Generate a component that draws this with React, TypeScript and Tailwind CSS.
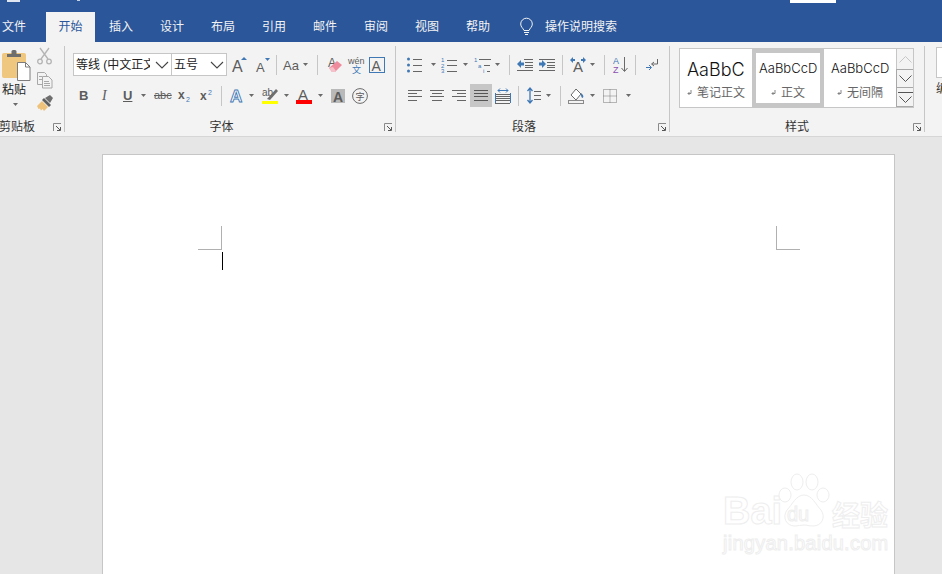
import type { ReactNode } from "react"

const GRAY = "#666666"
const BLUE = "#3f78b5"

function Ic({ w, h, className, children }: { w: number; h: number; className?: string; children: ReactNode }) {
  return (
    <svg width={w} height={h} viewBox={`0 0 ${w} ${h}`} className={`shrink-0 overflow-visible ${className ?? ""}`}>
      {children}
    </svg>
  )
}

function Caret({ className }: { className?: string }) {
  return (
    <Ic w={5} h={3} className={className}>
      <path d="M0 0h5L2.500 3z" fill="#6a6a6a" />
    </Ic>
  )
}

function Sep({ className }: { className?: string }) {
  return <div className={`h-[20px] w-px shrink-0 bg-[#c6c6c6] ${className ?? ""}`} />
}

// horizontal text lines used by the list and alignment icons
function Bars({ rows, fill = GRAY }: { rows: [number, number, number][]; fill?: string }) {
  return (
    <g fill={fill} shapeRendering="crispEdges">
      {rows.map(([x, y, w], i) => (
        <rect key={i} x={x} y={y} width={w} height={1} />
      ))}
    </g>
  )
}

function Chevron({ stroke = "#555555", className }: { stroke?: string; className?: string }) {
  return (
    <Ic w={14} h={8} className={className}>
      <path d="M1 1l6 6 6-6" fill="none" stroke={stroke} strokeWidth="1.100" />
    </Ic>
  )
}

function Launcher() {
  return (
    <Ic w={9} h={9} className="absolute bottom-[0px] right-[2px]">
      <path d="M.5 8V.5H8" fill="none" stroke="#8a8a8a" />
      <path d="M3 3l4 4M7.500 4v3.500H4" fill="none" stroke="#555555" />
    </Ic>
  )
}

function Group({ label, width, children, labelClass }: { label: string; width: string; children: ReactNode; labelClass?: string }) {
  return (
    <div className={`relative my-[4px] flex shrink-0 flex-col border-r border-[#c6c6c6] pt-[7px] ${width}`}>
      <div className="flex-1">{children}</div>
      <div className={`-mb-[3px] h-[16px] text-center text-[12px] leading-[16px] text-[#333333] ${labelClass ?? ""}`}>{label}</div>
      <Launcher />
    </div>
  )
}

function Row({ children, className }: { children: ReactNode; className?: string }) {
  return <div className={`flex h-[23px] items-center ${className ?? ""}`}>{children}</div>
}

function Combo({ text, className, textWidth }: { text: string; className: string; textWidth: string }) {
  return (
    <div className={`flex h-[23px] items-center justify-between border border-[#c6c6c6] bg-white pr-[2px] ${className}`}>
      <span className={`overflow-hidden whitespace-nowrap pl-[2px] pt-[1px] text-[12px] text-[#222222] ${textWidth}`}>{text}</span>
      <Chevron stroke="#444444" />
    </div>
  )
}

function Clipboard() {
  return (
    <div className="-mt-[5px] flex h-[65px]">
      <div className="flex w-[36px] flex-col pl-[2px] pt-[2px]">
        <Ic w={29} h={32}>
          <rect x="0" y="3" width="24" height="25" rx="2" fill="#f0c77e" />
          <path d="M5 4h14v3H5z" fill="#6e6e6e" />
          <rect x="9.500" y="0" width="5" height="5" rx="1.500" fill="#6e6e6e" />
          <path d="M15.500 12.500h8l4.500 4.500v13.500h-12.500z" fill="#ffffff" stroke="#7c7c7c" />
          <path d="M23.500 12.500v4.500h4.500" fill="none" stroke="#7c7c7c" />
        </Ic>
        <span className="w-[26px] text-[12px] leading-[17px] text-[#222222]">粘贴</span>
        <Caret className="ml-[11px] mt-[4px]" />
      </div>
      <div className="flex flex-col pl-[1px]">
        <Ic w={15} h={17}>
          <g fill="none" stroke="#b4b4b4" strokeWidth="1.300">
            <path d="M3 0l8 11M12 0L4 11" />
            <circle cx="3" cy="13.500" r="2.300" />
            <circle cx="12" cy="13.500" r="2.300" />
          </g>
        </Ic>
        <Ic w={16} h={17} className="mt-[7px]">
          <g fill="#f3f3f3" stroke="#a8a8a8">
            <path d="M.5.500h7l2 2v10h-9z" />
            <path d="M5.500 4.500h6l3.500 3.500v8h-9.500z" />
          </g>
          <Bars fill="#a8a8a8" rows={[[2, 4, 3], [2, 7, 3], [7, 9, 5], [7, 11, 6], [7, 13, 6]]} />
        </Ic>
        <Ic w={17} h={17} className="mt-[6px]">
          <path d="M0 11l5-5 6 6-4 4-1.500-2-1.500 1.500-1-2-1.500.5z" fill="#eec27a" />
          <path d="M5 5l2-2 7 7-2 2z" fill="#5f5f5f" />
          <path d="M8 3l5-3 3 3-3 5z" fill="#6e6e6e" />
        </Ic>
      </div>
    </div>
  )
}

function FontRowOne() {
  const t = { fontFamily: "Liberation Sans", fill: "#5c5c5c" }
  return (
    <Row className="pl-[8px]">
      <Combo text="等线 (中文正文)" textWidth="w-[76px]" className="w-[99px]" />
      <Combo text="五号" textWidth="w-[30px]" className="-ml-px w-[56px]" />
      <Ic w={15} h={15} className="ml-[5px]">
        <text x="0" y="15" fontSize="16" {...t}>A</text>
        <path d="M9 3l3-3 3 3z" fill={BLUE} />
      </Ic>
      <Ic w={14} h={15} className="ml-[9px]">
        <text x="0" y="15" fontSize="13" {...t}>A</text>
        <path d="M9 1h5l-2.500 3z" fill={BLUE} />
      </Ic>
      <Sep className="ml-[6px]" />
      <Ic w={15} h={14} className="ml-[6px]">
        <text x="0" y="12" fontSize="13" {...t}>Aa</text>
      </Ic>
      <Caret className="ml-[5px]" />
      <Sep className="ml-[9px]" />
      <Ic w={15} h={17} className="ml-[9px]">
        <text x="1" y="11" fontSize="12" {...t}>A</text>
        <path d="M2 12l8-7 5 4-7 7H5z" fill="#ee8b9c" />
        <path d="M2 12l3 4h3l1-1-3-4z" fill="#f4c0c9" />
      </Ic>
      <Ic w={16} h={17} className="ml-[6px]">
        <text x="0" y="8" fontSize="9" {...t}>wén</text>
        <text x="4" y="17" fontSize="9" fill={BLUE} fontFamily="Noto Sans CJK SC">文</text>
      </Ic>
      <Ic w={16} h={16} className="ml-[5px]">
        <rect x=".5" y=".5" width="15" height="15" fill="none" stroke={BLUE} />
        <text x="2.500" y="13.500" fontSize="14" {...t}>A</text>
      </Ic>
    </Row>
  )
}

function FontRowTwo() {
  const t = { fontFamily: "Liberation Sans", fill: "#5c5c5c" }
  return (
    <Row className="mt-[8px] pl-[14px]">
      <span className="w-[9px] text-[13px] font-bold leading-none text-[#5c5c5c]">B</span>
      <span className="ml-[14px] w-[8px] font-['Liberation_Serif',serif] text-[14px] italic leading-none text-[#5c5c5c]">I</span>
      <span className="ml-[13px] w-[10px] text-[13px] font-bold leading-none text-[#5c5c5c] underline">U</span>
      <Caret className="ml-[8px]" />
      <span className="ml-[8px] w-[17px] whitespace-nowrap text-[11px] leading-none text-[#5c5c5c] line-through">abc</span>
      <Ic w={13} h={13} className="ml-[7px]">
        <text x="0" y="10" fontSize="12" fontWeight="bold" {...t}>x</text>
        <text x="8" y="13" fontSize="7" fill={BLUE} fontFamily="Liberation Sans">2</text>
      </Ic>
      <Ic w={12} h={13} className="ml-[9px]">
        <text x="0" y="11" fontSize="12" fontWeight="bold" {...t}>x</text>
        <text x="8" y="6" fontSize="7" fill={BLUE} fontFamily="Liberation Sans">2</text>
      </Ic>
      <Sep className="ml-[9px]" />
      <Ic w={17} h={17} className="ml-[7px]">
        <text x="1" y="15" fontSize="17" fontWeight="bold" fill="#ffffff" stroke={BLUE} strokeWidth=".9" fontFamily="Liberation Sans">A</text>
      </Ic>
      <Caret className="ml-[3px]" />
      <Ic w={16} h={17} className="ml-[8px]">
        <text x="0" y="9" fontSize="10" {...t}>ab</text>
        <path d="M5 12l9-10 2 2-8 9z" fill="#6e6e6e" />
        <rect x="0" y="14" width="16" height="3" fill="#ffff00" />
      </Ic>
      <Caret className="ml-[6px]" />
      <Ic w={16} h={17} className="ml-[7px]">
        <text x="2" y="13" fontSize="15" {...t}>A</text>
        <rect x="0" y="13" width="16" height="4" fill="#ff0000" />
      </Ic>
      <Caret className="ml-[6px]" />
      <Ic w={14} h={14} className="ml-[8px]">
        <rect width="14" height="14" fill="#b9b9b9" />
        <text x="2" y="12.500" fontSize="14" fontWeight="bold" {...t}>A</text>
      </Ic>
      <Ic w={16} h={16} className="ml-[7px]">
        <circle cx="8" cy="8" r="7.400" fill="none" stroke="#6a6a6a" />
        <text x="3.500" y="12" fontSize="9" fill="#5c5c5c" fontFamily="Noto Sans CJK SC">字</text>
      </Ic>
    </Row>
  )
}

function ParaRowOne() {
  const tiny = { fontSize: 6, fill: BLUE, fontFamily: "Liberation Sans" }
  return (
    <Row>
      <Ic w={16} h={16} className="ml-[11px]">
        <g fill={BLUE}>
          <circle cx="1.500" cy="2" r="1.500" />
          <circle cx="1.500" cy="8" r="1.500" />
          <circle cx="1.500" cy="14" r="1.500" />
        </g>
        <Bars rows={[[6, 2, 9], [6, 8, 9], [6, 14, 9]]} />
      </Ic>
      <Caret className="ml-[8px]" />
      <Ic w={16} h={16} className="ml-[5px]">
        <text x="0" y="5" {...tiny}>1</text>
        <text x="0" y="10.500" {...tiny}>2</text>
        <text x="0" y="16" {...tiny}>3</text>
        <Bars rows={[[6, 3, 10], [6, 8, 10], [6, 14, 10]]} />
      </Ic>
      <Caret className="ml-[6px]" />
      <Ic w={17} h={16} className="ml-[6px]">
        <text x="0" y="5" {...tiny}>1</text>
        <text x="4" y="10.500" {...tiny}>a</text>
        <text x="9" y="16" {...tiny}>i</text>
        <Bars rows={[[5, 2, 12], [10, 8, 6], [13, 14, 3]]} />
      </Ic>
      <Caret className="ml-[4px]" />
      <Sep className="ml-[9px]" />
      <Ic w={16} h={13} className="ml-[7px]">
        <Bars rows={[[7, 1, 9], [8, 4, 8], [8, 7, 8], [8, 9, 8], [0, 12, 16]]} />
        <path d="M0 6l4-4v2.500h3v3H4V10z" fill={BLUE} />
      </Ic>
      <Ic w={16} h={13} className="ml-[6px]">
        <Bars rows={[[0, 1, 16], [8, 4, 8], [8, 7, 8], [8, 9, 8], [0, 12, 16]]} />
        <path d="M7 6L3 2v2.500H0v3h3V10z" fill={BLUE} />
      </Ic>
      <Sep className="ml-[7px]" />
      <Ic w={17} h={15} className="ml-[7px]">
        <text x="3" y="15" fontSize="15" fill="#5c5c5c" fontFamily="Liberation Sans">A</text>
        <path d="M0 3l3-3v2h2v2H3v2zM16 3l-3-3v2h-2v2h2v2z" fill={BLUE} />
      </Ic>
      <Caret className="ml-[3px]" />
      <Sep className="ml-[9px]" />
      <Ic w={15} h={17} className="ml-[8px]">
        <text x="0" y="8" fontSize="9" fill={BLUE} fontFamily="Liberation Sans">A</text>
        <text x="0" y="17" fontSize="9" fill="#8a4fb0" fontFamily="Liberation Sans">Z</text>
        <path d="M11.500 1v14M8.500 12l3 3.500 3-3.500" fill="none" stroke="#6a6a6a" />
      </Ic>
      <Sep className="ml-[7px]" />
      <Ic w={12} h={12} className="ml-[10px]">
        <path d="M11.500 0v5H6M8 3L5.500 5 8 7" fill="none" stroke={GRAY} />
        <path d="M0 8.500h5M3 6l2.500 2.500L3 11" fill="none" stroke={BLUE} />
      </Ic>
    </Row>
  )
}

function ParaRowTwo() {
  return (
    <Row className="mt-[8px]">
      <Ic w={14} h={11} className="ml-[12px]">
        <Bars rows={[[0, 0, 14], [0, 3, 9], [0, 6, 14], [0, 10, 9]]} />
      </Ic>
      <Ic w={14} h={11} className="ml-[8px]">
        <Bars rows={[[0, 0, 14], [2, 3, 10], [0, 6, 14], [2, 10, 10]]} />
      </Ic>
      <Ic w={14} h={11} className="ml-[8px]">
        <Bars rows={[[0, 0, 14], [5, 3, 9], [0, 6, 14], [5, 10, 9]]} />
      </Ic>
      <div className="ml-[4px] flex h-[23px] w-[22px] items-center justify-center bg-[#c6c6c6]">
        <Ic w={14} h={11}>
          <Bars fill="#555555" rows={[[0, 0, 14], [0, 3, 14], [0, 6, 14], [0, 10, 14]]} />
        </Ic>
      </div>
      <Ic w={16} h={16} className="ml-[3px]">
        <Bars rows={[[0, 6, 15], [0, 8, 15], [0, 10, 15], [0, 12, 15], [0, 15, 15]]} />
        <path d="M.5 5V15M15.500 5V15" stroke={BLUE} />
        <path d="M3 2.500h10M5 .5L3 2.500l2 2M11 .5l2 2-2 2" fill="none" stroke={BLUE} />
      </Ic>
      <Sep className="ml-[7px]" />
      <Ic w={14} h={17} className="ml-[8px]">
        <Bars rows={[[7, 4, 7], [7, 8, 7], [7, 12, 7]]} />
        <path d="M3 1v15M.5 4L3 1l2.500 3M.5 13L3 16l2.500-3" fill="none" stroke={BLUE} strokeWidth="1.300" />
      </Ic>
      <Caret className="ml-[5px]" />
      <Sep className="ml-[9px]" />
      <Ic w={16} h={16} className="ml-[7px]">
        <path d="M3 7l5-6 5 5-5 6z" fill="#ffffff" stroke="#6a6a6a" />
        <path d="M13 5c2 2 3 3 2 4.500S12.500 8 13 5z" fill={BLUE} />
        <rect x=".5" y="12.500" width="15" height="3" fill="#f3f3f3" stroke="#8a8a8a" />
      </Ic>
      <Caret className="ml-[6px]" />
      <Ic w={14} h={14} className="ml-[8px]">
        <rect x=".5" y=".5" width="13" height="13" fill="none" stroke="#777777" strokeDasharray="1 1" />
        <path d="M.5 7h13M7 .5v13" stroke="#777777" strokeDasharray="1 1" />
      </Ic>
      <Caret className="ml-[9px]" />
    </Row>
  )
}

function Return() {
  return (
    <Ic w={5} h={6} className="mr-[5px]">
      <path d="M4 0v3.500H1M2.500 2L1 3.500 2.500 5" fill="none" stroke="#777777" strokeWidth=".9" />
    </Ic>
  )
}

function StyleItem({ sample, name, big, active }: { sample: string; name: string; big?: boolean; active?: boolean }) {
  return (
    <div className={`flex h-full w-[72px] shrink-0 flex-col items-center overflow-hidden border-[4px] ${active ? "border-[#c6c6c6]" : "border-white"}`}>
      <div className={`mt-[6px] flex h-[20px] w-[58px] items-center overflow-hidden whitespace-nowrap font-['Inter',sans-serif] font-light text-[#111111] ${big ? "text-[18px]" : "text-[13px]"}`}>
        {sample}
      </div>
      <div className="mt-[6px] flex items-center text-[12px] leading-[16px] text-[#666666]">
        <Return />
        {name}
      </div>
    </div>
  )
}

function Styles() {
  return (
    <div className="-mt-[5px] ml-[9px] flex h-[60px] w-[235px] border border-[#c6c6c6] bg-white">
      <StyleItem sample="AaBbCcDd" name="笔记正文" big />
      <StyleItem sample="AaBbCcDd" name="正文" active />
      <StyleItem sample="AaBbCcDd" name="无间隔" />
      <div className="flex w-[17px] shrink-0 flex-col bg-[#f3f3f3]">
        <div className="flex h-[20px] items-center justify-center border-l border-[#c6c6c6]">
          <Ic w={13} h={7}>
            <path d="M.5 6.500l6-6 6 6" fill="none" stroke="#c6c6c6" />
          </Ic>
        </div>
        <div className="flex h-[19px] items-center justify-center border border-r-0 border-[#a8a8a8]">
          <Ic w={13} h={7}>
            <path d="M.5.5l6 6 6-6" fill="none" stroke="#555555" />
          </Ic>
        </div>
        <div className="flex flex-1 flex-col items-center justify-center border border-r-0 border-t-0 border-[#a8a8a8]">
          <div className="mb-[3px] h-px w-[15px] bg-[#555555]" />
          <Ic w={13} h={7}>
            <path d="M.5.5l6 6 6-6" fill="none" stroke="#555555" />
          </Ic>
        </div>
      </div>
    </div>
  )
}

function Watermark() {
  return (
    <div className="absolute left-[620px] top-[318px] h-[80px] w-[170px] select-none font-['Liberation_Sans',sans-serif] text-white [-webkit-text-stroke:1px_#eeeeee]">
      <span className="absolute left-0 top-[16px] text-[38px] font-bold leading-[44px]">Bai</span>
      <Ic w={52} h={56} className="absolute left-[55px] top-0">
        <g fill="#ffffff" stroke="#eeeeee">
          <ellipse cx="7" cy="22" rx="6" ry="7" />
          <ellipse cx="19" cy="9" rx="6" ry="8" />
          <ellipse cx="34" cy="9" rx="6" ry="8" />
          <ellipse cx="45" cy="22" rx="6" ry="7" />
          <path d="M26 22c8 0 12 10 17 15 5 7 1 16-8 16-4 0-6-1-9-1s-6 1-9 1c-9 0-13-9-8-16 5-5 9-15 17-15z" />
        </g>
      </Ic>
      <span className="absolute left-[64px] top-[29px] text-[20px] leading-[24px]">du</span>
      <span className="absolute left-[109px] top-[24px] font-['Noto_Sans_CJK_SC',sans-serif] text-[28px] font-bold leading-[34px]">经验</span>
      <span className="absolute left-0 top-[58px] whitespace-nowrap text-[20px] leading-[24px] tracking-[.25px]">jingyan.baidu.com</span>
    </div>
  )
}

const tabs = ["插入", "设计", "布局", "引用", "邮件", "审阅", "视图", "帮助"]

export default function App() {
  return (
    <div className="flex h-[574px] w-[942px] flex-col overflow-hidden bg-[#e6e6e6] font-['Liberation_Sans','Noto_Sans_CJK_SC',sans-serif]">
      <header className="h-[42px] shrink-0 bg-[#2b579a]">
        <div className="flex h-[12px] items-start">
          <div className="ml-[7px] h-[2px] w-[13px] bg-[#dfe6f1]" />
          <div className="ml-[57px] h-[1px] w-[3px] bg-[#c4d0e3]" />
          <div className="ml-[710px] h-[3px] w-[46px] bg-white" />
        </div>
        <nav className="flex h-[30px] items-center text-[12px] text-[#f3f3f3]">
          <div className="w-[46px] pl-[2px]">文件</div>
          <div className="flex h-[30px] w-[49px] items-center justify-center bg-[#f3f3f3] text-[#2b579a]">开始</div>
          {tabs.map((t) => (
            <div key={t} className="w-[51px] shrink-0 pl-[14px]">
              {t}
            </div>
          ))}
          <Ic w={13} h={18} className="ml-[17px]">
            <path d="M4 12.500C3 10 .7 9 .7 6a5.800 5.800 0 0 1 11.600 0c0 3-2.300 4-3.300 6.500z" fill="none" stroke="#f3f3f3" />
            <path d="M4 14.500h5M5 16.500h3" stroke="#f3f3f3" />
          </Ic>
          <span className="ml-[12px]">操作说明搜索</span>
        </nav>
      </header>

      <section className="flex h-[95px] shrink-0 border-b border-[#d6d6d6] bg-[#f3f3f3]">
        <Group label="剪贴板" width="w-[65px]" labelClass="-ml-[1px] !text-left">
          <Clipboard />
        </Group>
        <Group label="字体" width="w-[331px]" labelClass="-ml-[17px]">
          <FontRowOne />
          <FontRowTwo />
        </Group>
        <Group label="段落" width="w-[274px]" labelClass="-ml-[17px]">
          <ParaRowOne />
          <ParaRowTwo />
        </Group>
        <Group label="样式" width="w-[255px]">
          <Styles />
        </Group>
        <div className="min-w-0 flex-1 overflow-hidden pl-[11px] pt-[5px]">
          <div className="h-[31px] w-[20px] border border-[#c6c6c6] bg-white" />
          <div className="mt-[4px] whitespace-nowrap text-[12px] leading-[14px] text-[#333333]">编辑</div>
        </div>
      </section>

      <main className="flex-1 overflow-hidden pl-[102px] pt-[17px]">
        <div className="relative h-[500px] w-[793px] border border-[#c6c6c6] bg-white pt-[71px]">
          <div className="flex justify-between pl-[95px] pr-[94px]">
            <div className="h-[24px] w-[24px] border-b border-r border-[#b0b0b0]" />
            <div className="h-[24px] w-[24px] border-b border-l border-[#b0b0b0]" />
          </div>
          <div className="ml-[119px] mt-[2px] h-[18px] w-px bg-black" />
          <Watermark />
        </div>
      </main>
    </div>
  )
}
